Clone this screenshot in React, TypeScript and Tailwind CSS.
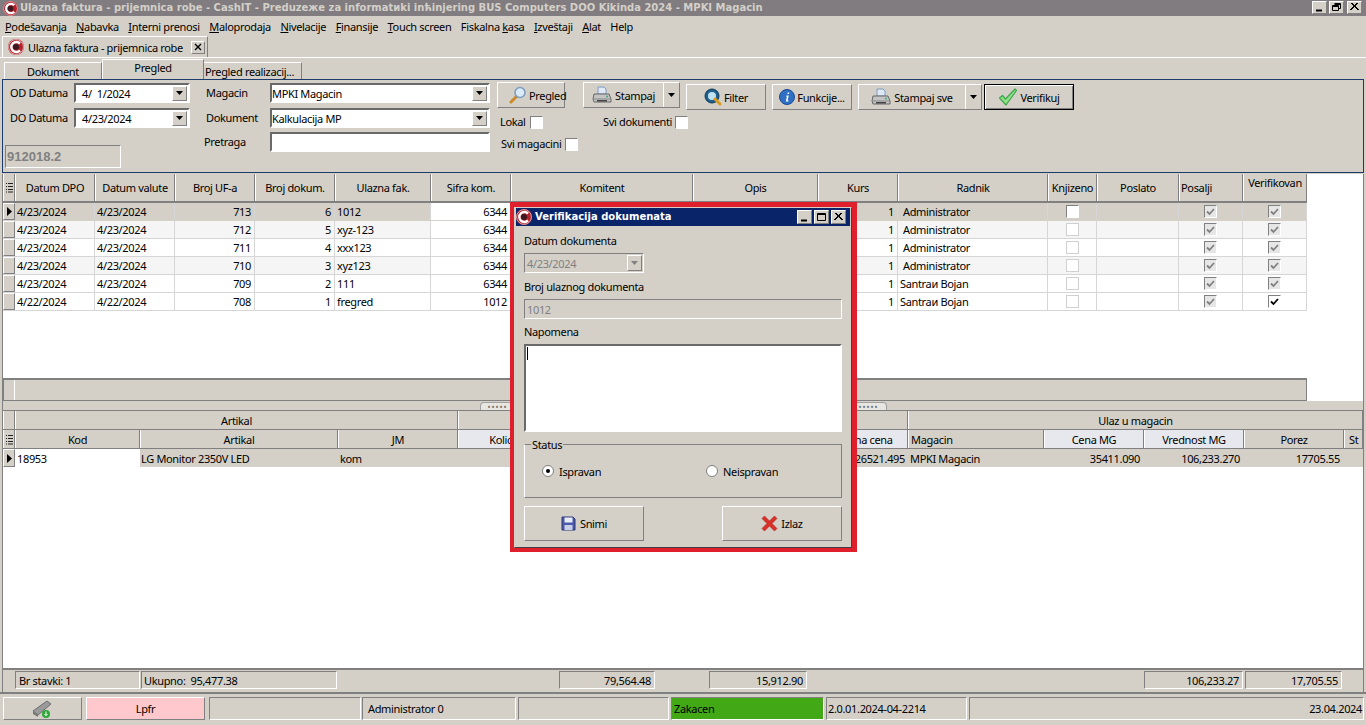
import React from "react";

const raised = "border border-t-white border-l-white border-r-[#808080] border-b-[#808080]";
const sunken = "border border-t-[#808080] border-l-[#808080] border-r-white border-b-white";
const deep = "border-2 border-t-[#6a6a6a] border-l-[#6a6a6a] border-r-white border-b-white";
const topCols = "grid grid-cols-[12px_80px_80px_80px_80px_96px_80px_182px_125px_80px_150px_49px_82px_64px_64px]";
const botCols = "grid grid-cols-[12px_125px_198px_120px_100px_250px_100px_136px_100px_100px_100px_19px]";
const head = "flex items-center justify-center overflow-hidden whitespace-nowrap border-l border-r border-l-white border-r-[#808080] bg-[#d4d0c8]";

function Logo({ size = 16 }: { size?: number }) {
  return (
    <svg width={size} height={size} viewBox="0 0 16 16" className="shrink-0">
      <circle cx="8" cy="8" r="8" fill="#b5202c" />
      <circle cx="8" cy="8" r="7.4" fill="none" stroke="#e8c8c8" strokeWidth="0.8" />
      <circle cx="8" cy="8" r="3" fill="#3a1a1e" />
      <path d="M12 4.6A5 5 0 1 0 12 11.4" fill="none" stroke="#fff" strokeWidth="2.4" />
    </svg>
  );
}
function Arrow({ color = "#000" }: { color?: string }) {
  return (
    <svg width="7" height="4" viewBox="0 0 7 4"><path d="M0 0h7L3.5 4z" fill={color} /></svg>
  );
}
function Combo({ w, text, inner = "pl-[6px]" }: { w: string; text: string; inner?: string }) {
  return (
    <div className={`${w} h-[20px] ${deep} bg-white flex items-center`}>
      <span className={`flex-1 ${inner} whitespace-pre`}>{text}</span>
      <span className={`w-[15px] h-[15px] mr-px bg-[#d4d0c8] flex items-center justify-center ${raised}`}><Arrow /></span>
    </div>
  );
}
function Printer() {
  return (
    <svg width="20" height="18" viewBox="0 0 20 18" className="shrink-0">
      <path d="M6 1h6l2 2v5H6z" fill="#dfe8f5" stroke="#7f9cc0" />
      <path d="M2 8h15l2 5v3H2l-1-3z" fill="#c4c4c4" stroke="#666" />
      <path d="M1 13h18" stroke="#888" />
      <rect x="5" y="14" width="10" height="1.5" fill="#444" />
      <circle cx="15" cy="10.5" r="1" fill="#4a7" />
    </svg>
  );
}
function Magnifier() {
  return (
    <svg width="18" height="18" viewBox="0 0 18 18" className="shrink-0">
      <path d="M2 16l6-6" stroke="#c98a2b" strokeWidth="3" strokeLinecap="round" />
      <circle cx="11" cy="6.5" r="5" fill="#dbeaf8" stroke="#7b9cbe" strokeWidth="1.5" />
    </svg>
  );
}
function GlobeIcon() {
  return (
    <svg width="18" height="18" viewBox="0 0 18 18" className="shrink-0">
      <circle cx="8" cy="8" r="7" fill="#1f5f8b" stroke="#0d3a5c" />
      <circle cx="8" cy="8" r="4" fill="#bfe3f2" />
      <path d="M11 11l5 5" stroke="#d99a20" strokeWidth="3" strokeLinecap="round" />
    </svg>
  );
}
function InfoIcon() {
  return (
    <svg width="16" height="16" viewBox="0 0 16 16" className="shrink-0">
      <circle cx="8" cy="8" r="7.5" fill="#2f6fc4" stroke="#1b4a94" />
      <path d="M8.8 3.4h1.6l-.4 1.7H8.4zM7.6 6.4h2.2l-1.2 5.2h1l-.3 1H6.8l1.1-5.2H7z" fill="#fff" />
    </svg>
  );
}
function CheckIcon() {
  return (
    <svg width="20" height="18" viewBox="0 0 20 18" className="shrink-0">
      <path d="M1.5 10l3-2.5 3 3.5L17 1l1.5 1.5L8 17z" fill="#8fe08a" stroke="#3da64a" strokeWidth="1.2" strokeLinejoin="round" />
    </svg>
  );
}
function Floppy() {
  return (
    <svg width="15" height="15" viewBox="0 0 15 15" className="shrink-0">
      <path d="M1 1h11l2 2v11H1z" fill="#4a5aa8" stroke="#2c3678" />
      <rect x="3.5" y="1.5" width="8" height="5" fill="#e8ecf6" />
      <rect x="3.5" y="9" width="8" height="5" fill="#c8d0e8" />
    </svg>
  );
}
function RedX() {
  return (
    <svg width="17" height="17" viewBox="0 0 17 17" className="shrink-0">
      <path d="M1 3.5L3.5 1 8.5 6l5-5L16 3.5l-5 5 5 5-2.5 2.5-5-5-5 5L1 13.5l5-5z" fill="#d8312a" stroke="#a82a20" strokeWidth="0.6" />
    </svg>
  );
}
function NetIcon() {
  return (
    <svg width="26" height="20" viewBox="0 0 26 20">
      <path d="M3 12L17 2l4 3-13 11z" fill="#9a9a9a" stroke="#6c6c6c" />
      <path d="M3 12l5 4v2l-5-3z" fill="#777" />
      <circle cx="16" cy="15" r="4" fill="#2ea836" />
      <path d="M16 12.5v4M14.5 15l1.5 1.7 1.5-1.7" stroke="#fff" fill="none" />
    </svg>
  );
}
function WinBtn({ kind, sm }: { kind: "min" | "max" | "close" | "restore"; sm?: boolean }) {
  return (
    <span className={`${sm ? "w-[15px] h-[14px]" : "w-[15px] h-[13px]"} bg-[#d4d0c8] ${raised} flex items-center justify-center`}>
      <svg width="11" height="10" viewBox="0 0 11 10" fill="none" stroke="#000">
        {kind === "min" && <path d="M2 8.5h6" strokeWidth="2" />}
        {kind === "max" && <path d="M1.5 1.5h8v7h-8zM1.5 2.5h8" />}
        {kind === "close" && <path d="M2 1l7 7M9 1L2 8M3 1l7 7M8 1L1 8" />}
        {kind === "restore" && <path d="M3.5 1.5h6v5h-2M3.5 2.5h6M1.5 3.5h6v5h-6zM1.5 4.5h6" />}
      </svg>
    </span>
  );
}
function Check({ mode }: { mode: "empty" | "dis" | "on" | "white" }) {
  return (
    <span className={`w-[13px] h-[13px] ${mode === "dis" ? "bg-[#e6e6e6]" : "bg-white"} ${mode === "empty" ? "border border-[#d0d0d0]" : sunken} flex items-center justify-center`}>
      {(mode === "dis" || mode === "on") && (
        <svg width="9" height="8" viewBox="0 0 9 8"><path d="M1 3.5l2.5 2.5L8 1" fill="none" stroke={mode === "on" ? "#000" : "#808080"} strokeWidth="1.8" /></svg>
      )}
    </span>
  );
}
function Btn({ w, icon, text, extra = "" }: { w: string; icon: React.ReactNode; text: string; extra?: string }) {
  return (
    <div className={`${w} h-[26px] ${raised} flex items-center justify-center gap-[2px] ${extra}`}>
      {icon}
      <span className="whitespace-nowrap">{text}</span>
    </div>
  );
}
function SplitBtn({ w, icon, text, extra = "" }: { w: string; icon: React.ReactNode; text: string; extra?: string }) {
  return (
    <div className={`${w} h-[26px] ${raised} flex items-stretch ${extra}`}>
      <div className="flex-1 flex items-center justify-center gap-[3px] border-r border-r-white">
        {icon}
        <span className="whitespace-nowrap">{text}</span>
      </div>
      <div className="w-[15px] flex items-center justify-center"><Arrow /></div>
    </div>
  );
}
function Indicator({ on }: { on?: boolean }) {
  return (
    <div className={`bg-[#d4d0c8] ${raised} flex items-center justify-center`}>
      {on && <svg width="5" height="9" viewBox="0 0 5 9"><path d="M0 0l5 4.5L0 9z" fill="#000" /></svg>}
    </div>
  );
}
function ListGlyph() {
  return (
    <div className={`${head} !border-l-white`}>
      <svg width="7" height="11" viewBox="0 0 7 11" stroke="#222"><path d="M0 1.5h1M0 4.5h1M0 7.5h1M0 10h1M2 1.5h5M2 4.5h5M2 7.5h5M2 10h5" /></svg>
    </div>
  );
}

const rows = [
  ["4/23/2024", "4/23/2024", "713", "6", "1012", "6344", "1", "Administrator", "pl-[5px]", "white", "dis", "dis"],
  ["4/23/2024", "4/23/2024", "712", "5", "xyz-123", "6344", "1", "Administrator", "pl-[5px]", "empty", "dis", "dis"],
  ["4/23/2024", "4/23/2024", "711", "4", "xxx123", "6344", "1", "Administrator", "pl-[5px]", "empty", "dis", "dis"],
  ["4/23/2024", "4/23/2024", "710", "3", "xyz123", "6344", "1", "Administrator", "pl-[5px]", "empty", "dis", "dis"],
  ["4/23/2024", "4/23/2024", "709", "2", "111", "6344", "1", "Santraи Bojan", "pl-[2px]", "empty", "dis", "dis"],
  ["4/22/2024", "4/22/2024", "708", "1", "fregred", "1012", "1", "Santraи Bojan", "pl-[2px]", "empty", "dis", "on"],
] as const;
const tinted = [false, true, false, true, false, false];
const topHeads = ["Datum DPO", "Datum valute", "Broj UF-a", "Broj dokum.", "Ulazna fak.", "Sifra kom.", "Komitent", "Opis", "Kurs", "Radnik", "Knjizeno", "Poslato"];

export default function App() {
  const rowCell = "flex items-center whitespace-nowrap overflow-hidden border-r border-r-[#d6d6d6]";
  return (
    <div className="relative w-[1366px] h-[725px] overflow-hidden bg-[#d4d0c8] flex flex-col text-[11px] tracking-[-0.34px] leading-none text-black font-['Noto_Sans',sans-serif]">
      {/* App title bar */}
      <div className="h-[16px] shrink-0 bg-[#807c80] flex items-center pl-[3px] pr-[4px]">
        <Logo size={15} />
        <span className="ml-[2px] flex-1 whitespace-nowrap font-bold tracking-normal text-[#d4d0c8] text-[10px] font-['DejaVu_Sans',sans-serif]">
          Ulazna faktura - prijemnica robe - CashIT - Preduzeже za informatиki inћinjering BUS Computers DOO Kikinda 2024 - MPKI Magacin
        </span>
        <span className="flex gap-[2px] -mt-[2px]"><WinBtn kind="min" /><WinBtn kind="restore" /><span className="ml-[1px]"><WinBtn kind="close" /></span></span>
      </div>
      {/* Menu */}
      <div className="h-[20px] shrink-0 flex items-center pl-[5px] gap-[9.5px]">
        {[["P", "odešavanja"], ["N", "abavka"], ["I", "nterni prenosi"], ["M", "aloprodaja"], ["N", "ivelacije"], ["F", "inansije"], ["T", "ouch screen"], ["Fiskalna ", "k", "asa"], ["I", "zveštaji"], ["A", "lat"], ["Help"]].map((m, i) => (
          <span key={i} className="whitespace-pre">
            {m.length === 3 ? (<>{m[0]}<u>{m[1]}</u>{m[2]}</>) : m.length === 2 ? (<><u>{m[0]}</u>{m[1]}</>) : m[0]}
          </span>
        ))}
      </div>
      {/* MDI tab */}
      <div className="h-[22px] shrink-0 border-b border-b-white pl-[2px]">
        <div className="w-[206px] h-[21px] border-t border-l border-r border-t-white border-l-white border-r-[#808080] flex items-center pl-[5px]">
          <Logo size={16} />
          <span className="ml-[4px] flex-1 whitespace-nowrap">Ulazna faktura - prijemnica robe</span>
          <span className={`w-[14px] h-[13px] mr-[2px] ${raised} flex items-center justify-center`}>
            <svg width="8" height="8" viewBox="0 0 8 8" stroke="#000" strokeWidth="1.4"><path d="M1 1l6 6M7 1L1 7" /></svg>
          </span>
        </div>
      </div>
      {/* Sub tabs */}
      <div className="h-[21px] shrink-0 flex items-end pl-[4px]">
        <div className="w-[98px] h-[17px] border-t border-l border-r border-t-white border-l-white border-r-[#808080] flex items-center justify-center">Dokument</div>
        <div className="w-[102px] h-[20px] border-t border-l border-r border-t-white border-l-white border-r-[#808080] flex items-start justify-center pt-[2px]">Pregled</div>
        <div className="w-[98px] h-[17px] border-t border-r border-t-white border-r-[#808080] flex items-center pl-[1px] whitespace-nowrap">Pregled realizacij...</div>
      </div>
      {/* Filter panel */}
      <div className="h-[94px] shrink-0 mx-[2px] border border-[#1c3a6b] flex items-start">
        <div className="w-[187px] shrink-0">
          <div className="mt-[3px] flex items-center">
            <span className="w-[71px] pl-[7px] pb-[2px]">OD Datuma</span>
            <Combo w="w-[116px]" text="4/  1/2024" />
          </div>
          <div className="mt-[5px] flex items-center">
            <span className="w-[71px] pl-[7px] pb-[2px]">DO Datuma</span>
            <Combo w="w-[116px]" text="4/23/2024" />
          </div>
          <div className={`mt-[17px] ml-[2px] w-[116px] h-[23px] ${sunken} flex items-center pl-[1px] font-bold tracking-normal text-[13px] text-[#808080] font-['Liberation_Sans',sans-serif]`}>912018.2</div>
        </div>
        <div className="ml-[14px] w-[286px] shrink-0">
          <div className="mt-[3px] flex items-center">
            <span className="w-[66px] pl-[2px] pb-[2px]">Magacin</span>
            <Combo w="w-[220px]" text="MPKI Magacin" inner="pl-0" />
          </div>
          <div className="mt-[5px] flex items-center">
            <span className="w-[66px] pl-[2px] pb-[2px]">Dokument</span>
            <Combo w="w-[220px]" text="Kalkulacija MP" inner="pl-0" />
          </div>
          <div className="mt-[4px] flex items-center">
            <span className="w-[66px] pb-[2px]">Pretraga</span>
            <div className={`w-[220px] h-[20px] ${deep} bg-white`} />
          </div>
        </div>
        <div className="ml-[7px] flex-1">
          <div className="h-[30px] flex items-start">
            <Btn w="w-[68px]" extra="mt-[2px] !justify-start pl-[11px]" icon={<Magnifier />} text="Pregled" />
            <SplitBtn w="w-[97px]" extra="mt-[2px] ml-[18px]" icon={<Printer />} text="Stampaj" />
            <Btn w="w-[80px]" extra="mt-[4px] ml-[6px]" icon={<GlobeIcon />} text="Filter" />
            <Btn w="w-[80px]" extra="mt-[4px] ml-[6px]" icon={<InfoIcon />} text="Funkcije..." />
            <SplitBtn w="w-[124px]" extra="mt-[4px] ml-[6px]" icon={<Printer />} text="Stampaj sve" />
            <div className="mt-[4px] ml-[2px] w-[90px] h-[26px] border border-black flex items-center justify-center gap-[2px] shadow-[inset_1px_1px_0_#fff,inset_-1px_-1px_0_#808080]">
              <CheckIcon /><span>Verifikuj</span>
            </div>
          </div>
          <div className="mt-[5px] h-[14px] flex items-center pl-[3px]">
            <span className="w-[30px] pb-[1px]">Lokal</span>
            <Check mode="white" />
            <span className="ml-[60px] w-[72px] whitespace-nowrap pb-[1px]">Svi dokumenti</span>
            <Check mode="white" />
          </div>
          <div className="mt-[8px] h-[14px] flex items-center pl-[4px]">
            <span className="w-[64px] whitespace-nowrap pb-[1px]">Svi magacini</span>
            <Check mode="white" />
          </div>
        </div>
      </div>
      {/* Main grids */}
      <div className="mt-[1px] flex-1 min-h-0 ml-[2px] mr-[2px] border-l border-r border-l-[#808080] border-r-[#808080] bg-white flex flex-col">
        <div className={`${topCols} h-[29px] shrink-0 w-[1304px] border-b-2 border-b-[#808080]`}>
          <ListGlyph />
          {topHeads.map((h) => (
            <div key={h} className={head}>{h}</div>
          ))}
          <div className={`${head} !justify-start pl-[1px]`}>Posalji</div>
          <div className={`${head} !items-start pt-[3px]`}>Verifikovan</div>
        </div>
        {rows.map((r, i) => {
          const bg = i === 0 ? "bg-[#d4d0c8] border-b-[#d4d0c8]" : tinted[i] ? "bg-[#f5f5f5] border-b-[#d6d6d6]" : "bg-white border-b-[#d6d6d6]";
          return (
            <div key={i} className={`${topCols} h-[18px] shrink-0 w-[1304px] border-b ${bg}`}>
              <Indicator on={i === 0} />
              <div className={`${rowCell} pl-[2px]`}>{r[0]}</div>
              <div className={`${rowCell} pl-[2px]`}>{r[1]}</div>
              <div className={`${rowCell} justify-end pr-[3px]`}>{r[2]}</div>
              <div className={`${rowCell} justify-end pr-[3px]`}>{r[3]}</div>
              <div className={`${rowCell} pl-[2px]`}>{r[4]}</div>
              <div className={`${rowCell} justify-end pr-[3px] bg-white`}>{r[5]}</div>
              <div className={rowCell} />
              <div className={rowCell} />
              <div className={`${rowCell} justify-end pr-[3px]`}>{r[6]}</div>
              <div className={`${rowCell} ${r[8]}`}>{r[7]}</div>
              <div className={`${rowCell} justify-center`}><Check mode={r[9]} /></div>
              <div className={rowCell} />
              <div className={`${rowCell} justify-center`}><Check mode={r[10]} /></div>
              <div className={`${rowCell} justify-center`}><Check mode={r[11]} /></div>
            </div>
          );
        })}
        <div className="h-[67px] shrink-0" />
        {/* Top grid footer */}
        <div className="h-[23px] shrink-0 w-[1304px] border border-[#808080] border-t-2 flex bg-[#d4d0c8]">
          <div className="w-[11px] border-r border-r-white" />
        </div>
        {/* Splitter */}
        <div className="h-[9px] shrink-0 bg-[#d4d0c8] flex justify-center">
          <div className="mt-[1px] w-[407px] h-[8px] rounded-t-[4px] border border-b-0 border-[#a0a0a0] bg-[#e8e6e0] flex items-center justify-between px-[7px]">
            <span className="text-[#707070] text-[8px] tracking-[1px]">•••••</span>
            <span className="text-[#707070] text-[8px] tracking-[1px]">•••••</span>
          </div>
        </div>
        {/* Bottom grid band */}
        <div className="h-[20px] shrink-0 grid grid-cols-[12px_443px_450px_455px] border-t border-t-[#808080] border-b border-b-[#808080]">
          <div className={head} />
          <div className={head}>Artikal</div>
          <div className={head} />
          <div className={head}>Ulaz u magacin</div>
        </div>
        <div className={`${botCols} h-[19px] shrink-0 border-b border-b-[#808080]`}>
          <ListGlyph />
          <div className={head}>Kod</div>
          <div className={head}>Artikal</div>
          <div className={head}>JM</div>
          <div className={`${head} !bg-[#e6e8ee]`}>Kolicina</div>
          <div className={head} />
          <div className={`${head} !bg-[#e6e8ee]`}>Nabavna cena</div>
          <div className={`${head} !justify-start pl-[2px]`}>Magacin</div>
          <div className={`${head} !bg-[#e6e8ee]`}>Cena MG</div>
          <div className={`${head} !bg-[#e6e8ee]`}>Vrednost MG</div>
          <div className={head}>Porez</div>
          <div className={`${head} !justify-start pl-[4px]`}>St</div>
        </div>
        <div className={`${botCols} h-[18px] shrink-0 bg-[#d4d0c8]`}>
          <Indicator on />
          <div className="flex items-center bg-white pl-[2px]">18953</div>
          <div className="flex items-center pl-[1px] whitespace-nowrap">LG Monitor 2350V LED</div>
          <div className="flex items-center pl-[2px]">kom</div>
          <div />
          <div />
          <div className="flex items-center justify-end pr-[3px]">26521.495</div>
          <div className="flex items-center pl-[2px]">MPKI Magacin</div>
          <div className="flex items-center justify-end pr-[4px]">35411.090</div>
          <div className="flex items-center justify-end pr-[4px]">106,233.270</div>
          <div className="flex items-center justify-end pr-[4px]">17705.55</div>
          <div />
        </div>
        <div className="flex-1 min-h-0" />
        {/* Totals */}
        <div className="h-[24px] shrink-0 border-t-2 border-t-[#808080] bg-[#d4d0c8] flex items-start pt-[1px] pl-[12px]">
          <div className={`w-[125px] h-[18px] ${sunken} flex items-center pl-[3px]`}>Br stavki: 1</div>
          <div className={`ml-[1px] w-[196px] h-[18px] ${sunken} flex items-center pl-[2px] whitespace-pre`}>Ukupno:  95,477.38</div>
          <div className={`ml-[222px] w-[96px] h-[18px] ${sunken} flex items-center justify-end pr-[3px]`}>79,564.48</div>
          <div className={`ml-[54px] w-[98px] h-[18px] ${sunken} flex items-center justify-end pr-[3px]`}>15,912.90</div>
          <div className={`ml-[337px] w-[99px] h-[18px] ${sunken} flex items-center justify-end pr-[3px]`}>106,233.27</div>
          <div className={`ml-[2px] w-[97px] h-[18px] ${sunken} flex items-center justify-end pr-[3px]`}>17,705.55</div>
        </div>
      </div>
      {/* Status bar */}
      <div className="h-[33px] shrink-0 border-t-2 border-t-[#808080] flex items-start pt-[3px] pl-[3px]">
        <div className={`w-[79px] h-[23px] ${raised} flex items-center justify-center`}><NetIcon /></div>
        <div className={`ml-[4px] w-[119px] h-[23px] bg-[#ffc8cc] ${raised} flex items-center justify-center`}>Lpfr</div>
        <div className={`ml-[4px] w-[152px] h-[23px] ${sunken}`} />
        <div className={`ml-px w-[154px] h-[23px] ${sunken} flex items-center pl-[5px]`}>Administrator 0</div>
        <div className={`ml-[2px] w-[151px] h-[23px] ${sunken}`} />
        <div className={`ml-[2px] w-[153px] h-[23px] bg-[#43a815] ${sunken} flex items-center pl-[2px]`}>Zakacen</div>
        <div className={`ml-[2px] w-[141px] h-[23px] ${sunken} flex items-center pl-[1px]`}>2.0.01.2024-04-2214</div>
        <div className={`ml-[2px] w-[395px] h-[23px] ${sunken} flex items-center justify-end pr-[1px]`}>23.04.2024</div>
      </div>
      {/* Dialog */}
      <div className="absolute left-[510px] top-[202px] w-[347px] h-[350px] border-t-[5px] border-b-[4px] border-l-[4px] border-r-[5px] border-[#e01f2d]">
        <div className="w-full h-full bg-[#d4d0c8] border border-t-[#d4d0c8] border-l-[#d4d0c8] border-r-[#404040] border-b-[#404040] flex flex-col">
          <div className="mx-px h-[18px] shrink-0 bg-[#0a246a] flex items-center pr-[4px]">
            <Logo size={16} />
            <span className="ml-[3px] flex-1 text-white font-bold tracking-normal text-[10px] whitespace-nowrap font-['DejaVu_Sans',sans-serif]">Verifikacija dokumenata</span>
            <span className="flex gap-[2px]"><WinBtn kind="min" sm /><WinBtn kind="max" sm /><WinBtn kind="close" sm /></span>
          </div>
          <div className="px-[9px] flex flex-col">
            <div className="mt-[7px] h-[14px] flex items-center">Datum dokumenta</div>
            <div className={`mt-[6px] w-[120px] h-[20px] ${sunken} flex items-center text-[#808080]`}>
              <span className="flex-1 pl-[2px]">4/23/2024</span>
              <span className={`w-[15px] h-[16px] mr-px ${raised} flex items-center justify-center`}><Arrow color="#808080" /></span>
            </div>
            <div className="mt-[6px] h-[14px] flex items-center">Broj ulaznog dokumenta</div>
            <div className={`mt-[6px] h-[20px] ${sunken} flex items-center pl-[2px] text-[#808080]`}>1012</div>
            <div className="mt-[5px] h-[14px] flex items-center">Napomena</div>
            <div className={`mt-[6px] h-[88px] ${deep} bg-white p-[1px]`}>
              <div className="w-px h-[13px] bg-black" />
            </div>
            <div className="relative mt-[12px] h-[54px] border border-t-[#808080] border-l-white border-r-[#808080] border-b-[#808080] flex items-center pl-[17px]">
              <span className="absolute left-[6px] -top-[6px] bg-[#d4d0c8] px-[1px]">Status</span>
              <span className="w-[12px] h-[12px] rounded-full bg-white border border-[#808080] flex items-center justify-center">
                <span className="w-[4px] h-[4px] rounded-full bg-black" />
              </span>
              <span className="ml-[5px] w-[147px]">Ispravan</span>
              <span className="w-[12px] h-[12px] rounded-full bg-white border border-[#808080]" />
              <span className="ml-[5px]">Neispravan</span>
            </div>
            <div className="mt-[8px] flex justify-between">
              <div className={`w-[120px] h-[35px] ${raised} flex items-center justify-center gap-[4px]`}><Floppy />Snimi</div>
              <div className={`w-[120px] h-[35px] ${raised} flex items-center justify-center gap-[3px]`}><RedX />Izlaz</div>
            </div>
          </div>
        </div>
      </div>
    </div>
  );
}
